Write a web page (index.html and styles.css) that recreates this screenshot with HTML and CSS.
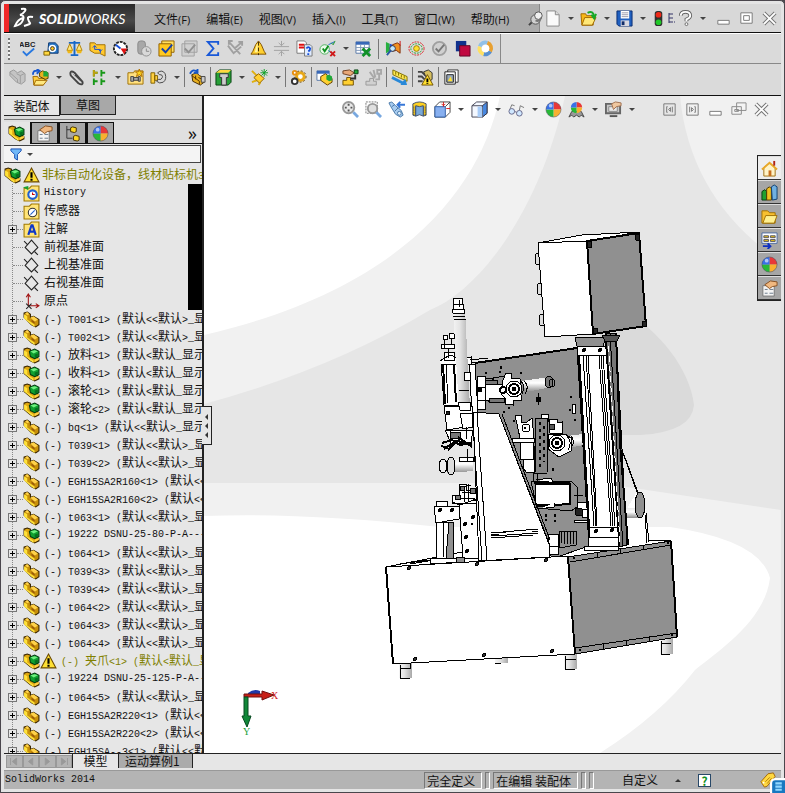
FILE: index.html
```html
<!DOCTYPE html>
<html lang="zh-CN">
<head>
    <meta charset="UTF-8">
    <title>SolidWorks 2014</title>
    <link rel="stylesheet" href="styles.css">
</head>
<body>
    <!-- icon sprite -->
    <svg class="sprite" aria-hidden="true">
        <defs>
            <linearGradient id="metal" x1="0" x2="1" y1="0" y2="0">
                <stop offset="0" stop-color="#f4f4f4"/><stop offset=".4" stop-color="#e4e4e4"/><stop offset="1" stop-color="#a8a8a8"/>
            </linearGradient>
            <linearGradient id="metalV" x1="0" x2="0" y1="0" y2="1">
                <stop offset="0" stop-color="#e8e8e8"/><stop offset=".4" stop-color="#fff"/><stop offset="1" stop-color="#8c8c8c"/>
            </linearGradient>
        </defs>
        <symbol id="part" viewBox="0 0 16 16"><path d="M1 2l3-1 3 2v3l3-1 5 3v5l-3 2-4-2-7-7z" fill="#c8900a" stroke="#3a2600"/><path d="M1 3l3 2v3l7 5v2l-3-2-7-6z" fill="#ffe23a"/><path d="M7 6l3-1 4 3-3 2zM4 1l2 2-2 1-2-2z" fill="#ffd24a"/><path d="M8 8l3 2v2l-3-2z" fill="#9c5c08"/></symbol>
        <symbol id="asm" viewBox="0 0 16 16"><path d="M1 2l3-1 3 1v4l2 1 6 4v2l-4 2-4-2-6-5z" fill="#e0a810" stroke="#3a2600"/><path d="M1 3l3 2v4l6 4v2l-3-2-6-5z" fill="#ffe23a"/><path d="M6 4l5-2 4 2v5l-4 2-4-2z" fill="#10a030" stroke="#043c10"/><path d="M7 4l4-1 3 1-4 2z" fill="#70f080"/><path d="M11 7l3-1v3l-3 1z" fill="#067020"/><path d="M11 12l4-2v2l-4 2z" fill="#ffd24a"/></symbol>
        <symbol id="warn" viewBox="0 0 16 16"><path d="M8 1l7 13H1z" fill="#ffe033" stroke="#6b4a00"/><path d="M7 5h2v5H7zM7 11h2v2H7z"/></symbol>
        <symbol id="history" viewBox="0 0 16 16"><path d="M1 3h5l2-2h7v14H1z" fill="#ffe478" stroke="#a07800"/><circle cx="9" cy="9" r="4" fill="#fff" stroke="#2060d0" stroke-width="2"/><path d="M9 7v2h2" fill="none" stroke="#c00"/><path d="M0 2l5-1v4z" fill="#18a030"/></symbol>
        <symbol id="sensor" viewBox="0 0 16 16"><path d="M1 3h5l2-2h7v14H1z" fill="#ffe478" stroke="#a07800"/><circle cx="9" cy="9" r="4" fill="#fff" stroke="#333"/><path d="M7 11l4-4" stroke="#2060d0"/></symbol>
        <symbol id="note" viewBox="0 0 16 16"><path d="M1 3h5l2-2h7v14H1z" fill="#ffe478" stroke="#a07800"/><path d="M5 13l3-9h1l3 9M6 10h5" fill="none" stroke="#1038c8" stroke-width="2"/></symbol>
        <symbol id="plane" viewBox="0 0 16 16"><path d="M8 1l6 7-6 6-6-6zM1 2l3 3M11 12l3 3" fill="none" stroke="#222"/></symbol>
        <symbol id="origin" viewBox="0 0 16 16"><path d="M5 12V2M3 4l2-3 2 3M5 12h10M12 10l3 2-3 2" fill="none" stroke="#a01010"/><path d="M3 10l5 5M8 10l-5 5" stroke="#222"/></symbol>
        <symbol id="spell" viewBox="0 0 18 18"><text x="-1" y="7" font-family="Liberation Sans" font-size="8" font-weight="bold" fill="#222">ABC</text><path d="M3 12l4 4 8-7" fill="none" stroke="#2878e0" stroke-width="2"/></symbol>
        <symbol id="measure" viewBox="0 0 18 18"><path d="M6 3h7l3 3v8H5z" fill="#2878c8" stroke="#103870"/><circle cx="10" cy="9" r="4" fill="#fff"/><circle cx="10" cy="9" r="2" fill="#ffc820" stroke="#333"/><path d="M1 12h6v4H1z" fill="#ffd840" stroke="#806000"/></symbol>
        <symbol id="mass" viewBox="0 0 18 18"><path d="M9 1v15M3 3h12M5 16h8" stroke="#1868c8" stroke-width="2"/><path d="M4 4l-3 7h6zM14 4l-3 7h6z" fill="#ffe880" stroke="#b08000"/><path d="M1 11h6l-1 3H2zM11 11h6l-1 3h-4z" fill="#f0b818"/></symbol>
        <symbol id="section" viewBox="0 0 18 18"><path d="M1 3h5l2 2h9v12l-6-3H6L1 11z" fill="#ffc830" stroke="#a07000"/><path d="M6 6v4h6v4M4 8l2-2 2 2M10 10l2 2 2-2" fill="none" stroke="#1850d8"/></symbol>
        <symbol id="gauge" viewBox="0 0 18 18"><circle cx="9" cy="9" r="7" fill="#fff" stroke="#222" stroke-width="2" stroke-dasharray="3 1"/><path d="M4 5l5 4" stroke="#1850d8" stroke-width="2"/><path d="M9 9l7 0-3 6z" fill="#e01010"/></symbol>
        <symbol id="lightOff" viewBox="0 0 18 18"><rect x="3" y="1" width="8" height="14" rx="3" fill="#a8a8a8" stroke="#888"/><circle cx="12" cy="12" r="5" fill="#d8d8d8" stroke="#909090"/><path d="M12 9v3h3" fill="none" stroke="#888"/></symbol>
        <symbol id="checkOn" viewBox="0 0 18 18"><path d="M4 1h13v12H4z" fill="#ffe060" stroke="#906000"/><path d="M1 4h13v13H1z" fill="#ffc820" stroke="#906000"/><path d="M4 9l4 4 7-8" fill="none" stroke="#1440b0" stroke-width="2"/></symbol>
        <symbol id="checkOff" viewBox="0 0 18 18"><path d="M4 1h13v12H4zM1 4h13v13H1z" fill="#d0d0d0" stroke="#a0a0a0"/><path d="M4 9l4 4 7-8" fill="none" stroke="#909090" stroke-width="2"/></symbol>
        <symbol id="sigma" viewBox="0 0 18 18"><path d="M15 5V2H4l6 7-6 7h11v-3" fill="none" stroke="#1858d8" stroke-width="2"/></symbol>
        <symbol id="scatter" viewBox="0 0 18 18"><path d="M2 2l12 13M15 3L8 9M1 6l6 8 8-7M12 2h4v4M2 5V1h4" fill="none" stroke="#a0a0a0" stroke-width="2"/></symbol>
        <symbol id="bell" viewBox="0 0 18 18"><path d="M9 1l3 4 3 7 2 3H1l2-3 3-7z" fill="#ffd030" stroke="#805000"/><path d="M9 2v14" stroke="#402800" stroke-dasharray="4 2"/><path d="M5 13l2-8 1-1v9z" fill="#fff4a0"/></symbol>
        <symbol id="spread" viewBox="0 0 18 18"><path d="M1 7h16M1 11h16M9 1v5M9 12v5M6 3l3 3 3-3M6 15l3-3 3 3" fill="none" stroke="#a0a0a0"/></symbol>
        <symbol id="compare" viewBox="0 0 18 18"><path d="M1 1h8l2 2v11H1z" fill="#fff" stroke="#777"/><path d="M3 5h6M3 8h6" stroke="#e01010" stroke-width="2"/><path d="M9 5h6l2 2v10H9z" fill="#e0ecff" stroke="#777"/><path d="M11 9q2-3 4 0 0 2-2 3M13 14v2" fill="none" stroke="#1850d8" stroke-width="2"/></symbol>
        <symbol id="verify" viewBox="0 0 18 18"><circle cx="6" cy="10" r="5" fill="#eafaea" stroke="#50b060"/><path d="M4 9l2 3 4-6" fill="none" stroke="#109020" stroke-width="2"/><path d="M10 5l6-3M10 11l3 3" stroke="#1868d0"/><path d="M12 12l5 5M17 12l-5 5" stroke="#d01818" stroke-width="2"/><path d="M13 3l2 2 2-4" fill="none" stroke="#109020"/></symbol>
        <symbol id="table" viewBox="0 0 18 18"><path d="M1 2h14v12H1z" fill="#fff" stroke="#5878a8"/><path d="M1 2h14v3H1z" fill="#3868b8"/><path d="M1 8h14M1 11h14M6 5v9M10 5v9" stroke="#8098b8"/><path d="M8 9l8 8M16 9l-8 8" stroke="#109028" stroke-width="3"/></symbol>
        <symbol id="curv" viewBox="0 0 18 18"><path d="M1 2l4 2v8l-4 2z" fill="#28b040"/><path d="M5 4l3 1v7l-3 1z" fill="#1850d8"/><path d="M8 5l5-2 3 2v9l-4-3-4 1z" fill="#f09020" stroke="#803010"/><circle cx="8" cy="9" r="3" fill="#c0e8ff" stroke="#334"/><path d="M6 11l-4 5" stroke="#2858a0" stroke-width="2"/><path d="M16 1v5" stroke="#d01010"/></symbol>
        <symbol id="waves" viewBox="0 0 18 18"><ellipse cx="9" cy="9" rx="8" ry="7" fill="none" stroke="#d82020" stroke-dasharray="2 1"/><ellipse cx="9" cy="9" rx="6" ry="5" fill="none" stroke="#20a030" stroke-dasharray="2 1"/><ellipse cx="9" cy="9" rx="3" ry="3" fill="#ffe030" stroke="#a08000"/></symbol>
        <symbol id="okOff" viewBox="0 0 18 18"><circle cx="9" cy="9" r="7" fill="#d0d0d0" stroke="#a0a0a0" stroke-width="2"/><path d="M5 9l3 3 6-7" fill="none" stroke="#777" stroke-width="2"/></symbol>
        <symbol id="squares" viewBox="0 0 18 18"><path d="M2 1h11v11H2z" fill="#10308c"/><path d="M6 6h11v11H6z" fill="#c00840" stroke="#600828"/></symbol>
        <symbol id="ring" viewBox="0 0 18 18"><g fill="none" stroke-width="4"><path d="M3 7a6 6 0 0 1 8-4" stroke="#90c0e8"/><path d="M11 3a6 6 0 0 1 3 9" stroke="#e8a030"/><path d="M14 12a6 6 0 0 1-7 3" stroke="#5890d0"/><path d="M7 15a6 6 0 0 1-4-8" stroke="#ffe060"/></g><circle cx="9" cy="9" r="4" fill="#fff"/></symbol>
        <symbol id="asmOff" viewBox="0 0 18 18"><path d="M1 3l4-2 4 3 4-2 4 3v8l-4 3-5-2-7-7z" fill="#c4c4c4" stroke="#989898"/><path d="M1 4l8 7v3M8 5l4 2 4-2M12 7v8" fill="none" stroke="#9c9c9c"/></symbol>
        <symbol id="insert" viewBox="0 0 18 18"><path d="M1 8h5l1 2h7l-2 7H2z" fill="#ffd040" stroke="#a06800"/><path d="M4 12h12l-4 5H2z" fill="#ffe880" stroke="#a06800"/><path d="M1 6q0-5 5-4M5 0l3 2-3 3" fill="none" stroke="#1858d0" stroke-width="2"/><path d="M8 4l3-2 6 2v6l-3 1-6-3z" fill="#e8b020" stroke="#504000"/><path d="M12 3l3-1 2 2v4h-5z" fill="#20a838"/></symbol>
        <symbol id="clip" viewBox="0 0 18 18"><path d="M15 13L7 4Q4 2 3 3t0 4l8 8q3 2 4 1t0-3L7 6" fill="none" stroke="#444" stroke-width="2"/><path d="M5 5l8 8" stroke="#999"/></symbol>
        <symbol id="pattern" viewBox="0 0 18 18"><path d="M3 1v7M3 4h4M11 1v7M11 4h4M3 10v7M3 13h4M11 10v7M11 13h4" stroke="#189818" stroke-width="2"/><path d="M3 1v7M3 4h4" stroke="#c0a010" stroke-width="2"/></symbol>
        <symbol id="smart" viewBox="0 0 18 18"><path d="M1 4h6l1-2h9v14H1z" fill="#ffe080" stroke="#a07000"/><path d="M4 8h3v5H4zM7 9h5v3H7zM12 8h2v5h-2z" fill="#aaa" stroke="#444"/><path d="M13 0l1 3h3l-2 2 1 3-3-2-3 2 1-3-2-2h3z" fill="#ffd820" stroke="#b07000"/></symbol>
        <symbol id="hook" viewBox="0 0 18 18"><path d="M1 4h4v11H1zM5 7h3v5H5z" fill="#ffd040" stroke="#806000"/><path d="M8 4q5-4 8 1 2 6-2 9-4 2-7-1l2-2q3 1 4-2t-3-3z" fill="#d8d8d8" stroke="#444"/></symbol>
        <symbol id="move" viewBox="0 0 18 18"><path d="M3 6l5-2 3 3 5 2v5l-4 3-8-4z" fill="#e8b020" stroke="#402800"/><path d="M3 7l8 6v3M10 9l6 3M7 7v4" stroke="#503000" fill="none"/><path d="M1 5q3-6 8-2M9 0v4H5" fill="none" stroke="#1858c8" stroke-width="2"/><path d="M13 8h4v6h-4z" fill="#ccc" stroke="#444"/></symbol>
        <symbol id="hidden" viewBox="0 0 18 18"><path d="M1 4l4-3h12v13l-3 3H1z" fill="#28a038" stroke="#064010"/><path d="M1 4l4-3h12l-3 3z" fill="#ffd840"/><path d="M5 5h9v4h-2v8H7V9H5z" fill="#ccc" stroke="#333"/></symbol>
        <symbol id="axis" viewBox="0 0 18 18"><path d="M1 2l6 6M1 14l5-2M8 17l2-3" stroke="#e0b010" stroke-width="2"/><path d="M8 5l6 5-5 5-6-6z" fill="#ffd030" stroke="#906000"/><path d="M14 0v8M10 4h8M11 1l6 6M17 1l-6 6" stroke="#10a028"/></symbol>
        <symbol id="gears" viewBox="0 0 18 18"><circle cx="11" cy="8" r="4" fill="#fff" stroke="#e8a818" stroke-width="3"/><circle cx="11" cy="8" r="6" fill="none" stroke="#704800" stroke-dasharray="2 2"/><circle cx="5" cy="13" r="3" fill="#fff" stroke="#333" stroke-width="2"/><circle cx="5" cy="4" r="2" fill="#fff" stroke="#e89010" stroke-width="2"/></symbol>
        <symbol id="bom" viewBox="0 0 18 18"><path d="M1 2h13v10H1z" fill="#fff" stroke="#5878a8"/><path d="M1 2h13v3H1z" fill="#3868b8"/><path d="M5 8l5-3 7 5v4l-5 3-7-5z" fill="#ffd030" stroke="#604000"/><path d="M11 7l3-1 3 2v4l-3 1-3-2z" fill="#20a838"/></symbol>
        <symbol id="explode" viewBox="0 0 18 18"><path d="M1 12h4V9h4v3h3v5H1z" fill="#ffd030" stroke="#705000"/><path d="M1 2l7-1 5 3-4 3-8-2z" fill="#e8a878" stroke="#704020"/><path d="M13 1h4v4h-4z" fill="#20a838" stroke="#064010"/><path d="M14 6v4H9" fill="none" stroke="#333" stroke-width="2"/></symbol>
        <symbol id="explodeOff" viewBox="0 0 18 18"><path d="M1 13h4v-3h4v3h3v4H1z" fill="#d0d0d0" stroke="#999"/><path d="M13 1h4v4h-4zM15 6v5h-4M5 3l5 7M9 1l2 8" fill="none" stroke="#a8a8a8" stroke-width="2"/></symbol>
        <symbol id="ruler" viewBox="0 0 18 18"><path d="M2 1l15 7v5L2 6z" fill="#ffe850" stroke="#807000"/><path d="M5 3v3M8 4v3M11 6v3M14 7v3" stroke="#807000"/><path d="M1 9l12 6" stroke="#2888d8" stroke-width="3"/><path d="M10 17l7 0-2-7z" fill="#2888d8"/></symbol>
        <symbol id="clash" viewBox="0 0 18 18"><path d="M1 3h4l4 4M1 8h4l3 3M1 13h5" fill="none" stroke="#444" stroke-width="2"/><path d="M7 3l5-2 4 3v7l-4 3z" fill="#d8c060" stroke="#333"/><path d="M11 6l6 11H5z" fill="#ffe030" stroke="#705000"/><path d="M11 10v4M11 15v1" stroke="#000" stroke-width="2"/></symbol>
        <symbol id="snap" viewBox="0 0 18 18"><path d="M5 1h11v13H5z" fill="#fff" stroke="#333"/><path d="M2 3h11v13H2z" fill="#fff" stroke="#222"/><path d="M4 6h7v8H4z" fill="#9ab" stroke="#222"/><path d="M5 13l3-5 2 5z" fill="#ffe030"/></symbol>
        <symbol id="pin" viewBox="0 0 18 18"><path d="M4 13l-3 3" stroke="#444" stroke-width="2"/><circle cx="8" cy="10" r="5" fill="#d0d0d0" stroke="#555"/><circle cx="11" cy="6" r="4" fill="#f0f0f0" stroke="#555"/><path d="M8 11q4 2 6-3" fill="none" stroke="#777" stroke-width="2"/></symbol>
        <symbol id="new" viewBox="0 0 18 18"><path d="M3 1h9l4 4v12H3z" fill="#fafafa" stroke="#888"/><path d="M12 1v4h4" fill="#ddd" stroke="#888"/></symbol>
        <symbol id="open" viewBox="0 0 18 18"><path d="M1 4h5l1 2h7v10H2z" fill="#f8b818" stroke="#a06800"/><path d="M5 8h12l-4 8H2z" fill="#ffe878" stroke="#a06800"/><path d="M8 3q6-3 7 4M12 5l3 4 2-5" fill="none" stroke="#18a828" stroke-width="2"/></symbol>
        <symbol id="save" viewBox="0 0 18 18"><path d="M1 1h16v16H3l-2-2z" fill="#2060c0" stroke="#0a2c70"/><path d="M5 1h9v8H5z" fill="#fff"/><path d="M6 3h7M6 5h7M6 7h7" stroke="#99a"/><path d="M5 11h9v6H5z" fill="#d8d8e0"/><path d="M6 12h3v4H6z" fill="#102c68"/></symbol>
        <symbol id="light" viewBox="0 0 18 18"><rect x="5" y="1" width="8" height="16" rx="3" fill="#303030"/><circle cx="9" cy="5" r="3" fill="#f02818"/><circle cx="9" cy="13" r="3" fill="#20c828"/></symbol>
        <symbol id="list" viewBox="0 0 9 18"><path d="M2 4v10M2 5h4M2 9h4M2 13h4M7 13h1" stroke="#336" fill="none"/></symbol>
        <symbol id="help" viewBox="0 0 18 18"><path d="M4 6q0-4 5-4t5 4q0 2-4 4v2" fill="none" stroke="#666" stroke-width="4"/><path d="M4 6q0-4 5-4t5 4q0 2-4 4v2" fill="none" stroke="#fff" stroke-width="2"/><circle cx="10" cy="15" r="1.5" fill="#fff" stroke="#666"/></symbol>
        <symbol id="min" viewBox="0 0 18 18"><path d="M3 11h12v4H3z" fill="#fff" stroke="#777"/></symbol>
        <symbol id="max" viewBox="0 0 18 18"><path d="M3 3h12v11H3zM6 6h6v5H6z" fill="#fff" stroke="#777"/></symbol>
        <symbol id="restore" viewBox="0 0 18 18"><path d="M7 2h10v8H7zM2 6h10v8H2zM5 9h4v2H5z" fill="#f4f4f4" stroke="#888"/></symbol>
        <symbol id="close" viewBox="0 0 18 18"><path d="M3 3l12 12M15 3L3 15" stroke="#777" stroke-width="4"/><path d="M3 3l12 12M15 3L3 15" stroke="#fff" stroke-width="2"/></symbol>
        <symbol id="dockL" viewBox="0 0 18 18"><path d="M3 3h12v12H3zM7 6h-1v6h1M8 9l2-2v4zM12 6v6" fill="none" stroke="#777"/></symbol>
        <symbol id="dockR" viewBox="0 0 18 18"><path d="M3 3h12v12H3zM11 6h1v6h-1M10 9l-2-2v4zM6 6v6" fill="none" stroke="#777"/></symbol>
        <symbol id="zoomFit" viewBox="0 0 18 18"><circle cx="7" cy="7" r="6" fill="#e8e8e8" stroke="#999" stroke-width="2"/><path d="M7 3v2M7 9v2M3 7h2M9 7h2" stroke="#555" stroke-width="2"/><path d="M12 12l5 5" stroke="#78a8e0" stroke-width="3"/></symbol>
        <symbol id="zoomArea" viewBox="0 0 18 18"><path d="M1 1h12v12H1z" fill="none" stroke="#777" stroke-dasharray="2 1"/><circle cx="8" cy="8" r="5" fill="#e0e0e0" stroke="#999" stroke-width="2"/><path d="M12 12l5 5" stroke="#78a8e0" stroke-width="3"/></symbol>
        <symbol id="prev" viewBox="0 0 18 18"><path d="M1 2l3-1 4 4 6 5 2 5-3 2-5-3-5-8z" fill="#a8ccf0" stroke="#4878a8"/><path d="M4 6l3-2M7 11l4-4" stroke="#4878a8"/><circle cx="12" cy="13" r="2" fill="#e0f0ff" stroke="#4878a8"/><path d="M18 4h-7M13 1l-3 3 3 3" fill="none" stroke="#3878d8" stroke-width="2"/></symbol>
        <symbol id="cut" viewBox="0 0 18 18"><path d="M2 3q7-4 14 0v12l-3 1V6q-4 2-8 0v10l-3-1z" fill="#ffd020" stroke="#405068"/><path d="M5 5q4 2 8 0v11q-4-3-8 0z" fill="#78a8d8" stroke="#405068"/><path d="M3 6v9M15 6v9" stroke="#333" stroke-dasharray="1 1"/></symbol>
        <symbol id="orient" viewBox="0 0 18 18"><path d="M1 6l5-5h11v11l-5 5H1z" fill="#fff" stroke="#444"/><path d="M1 6h11v11H1z" fill="#88b0f0" stroke="#3060a8"/><path d="M12 6l5-5" stroke="#444"/><path d="M10 1v5M17 8h-4M8 3l2 2 2-2" fill="none" stroke="#d01818"/></symbol>
        <symbol id="cube" viewBox="0 0 18 18"><path d="M1 5l5-4h11v12l-5 4H1z" fill="#f4f8ff" stroke="#445"/><path d="M12 5l5-4v12l-5 4z" fill="#4888e0" stroke="#334"/><path d="M1 5h11v12" fill="none" stroke="#445"/><path d="M7 6h5v11H7z" fill="#a8ccf8"/></symbol>
        <symbol id="glasses" viewBox="0 0 18 18"><path d="M2 9L4 4l3 1M12 10l1-5 4 2" fill="none" stroke="#777"/><circle cx="4" cy="11" r="3" fill="#d0e8ff" stroke="#668"/><circle cx="12" cy="13" r="3" fill="#d0e8ff" stroke="#668"/><path d="M7 11l2 1" stroke="#668"/></symbol>
        <symbol id="ball" viewBox="0 0 18 18"><path d="M9 9V1a8 8 0 0 1 8 8z" fill="#e83838"/><path d="M9 9h8a8 8 0 0 1-8 8z" fill="#f8b030"/><path d="M9 9v8a8 8 0 0 1-8-8z" fill="#28b838"/><path d="M9 9H1a8 8 0 0 1 8-8z" fill="#3870e8"/><circle cx="9" cy="9" r="8" fill="none" stroke="#445" stroke-opacity=".5"/><circle cx="6" cy="5" r="2" fill="#fff" fill-opacity=".6"/></symbol>
        <symbol id="scene" viewBox="0 0 18 18"><path d="M1 17l3-6h10l3 6-3-2-2 2-3-2-3 2-2-2z" fill="#999" stroke="#444"/><path d="M9 7V1a6 6 0 0 1 6 6z" fill="#e83838"/><path d="M15 7a6 6 0 0 1-6 6V7z" fill="#f8b030"/><path d="M9 13a6 6 0 0 1-6-6h6z" fill="#28b838"/><path d="M3 7a6 6 0 0 1 6-6v6z" fill="#3870e8"/></symbol>
        <symbol id="screen" viewBox="0 0 18 18"><path d="M1 3h15v10H1z" fill="#c8c8c8" stroke="#666" stroke-width="2"/><path d="M4 6h9v5H4z" fill="#e8e8e8" stroke="#888"/><path d="M7 3l4-2 6 1v3l-5 1-3 3z" fill="#f0c8a0" stroke="#a07050"/><path d="M5 16h8" stroke="#555" stroke-width="2"/></symbol>
        <symbol id="props" viewBox="0 0 18 18"><path d="M2 6h12v11H2z" fill="#f4f4f4" stroke="#777"/><path d="M4 10h3M4 14h3M9 10h4M9 14h4" stroke="#678"/><path d="M4 5l6-4 7 1v4l-5 1-3 2z" fill="#f0b880" stroke="#885020"/></symbol>
        <symbol id="config" viewBox="0 0 18 18"><path d="M3 1v13h6M3 5h4" fill="none" stroke="#333"/><path d="M7 3l2-1 4 1v4l-2 1-4-1zM10 12l2-1 4 1v4l-2 1-4-1z" fill="#ffd820" stroke="#443000"/></symbol>
        <symbol id="home" viewBox="0 0 18 18"><path d="M3 8v9h12V8L9 3z" fill="#fff4c8" stroke="#a07010"/><path d="M1 10l8-7 8 7" fill="none" stroke="#e8a828" stroke-width="2"/><path d="M8 11h3v6H8z" fill="#c87020"/><path d="M13 1h2v5h-2z" fill="#b02010"/></symbol>
        <symbol id="library" viewBox="0 0 18 18"><path d="M1 8l3-2 2 2v9H1z" fill="#20a030" stroke="#063c10"/><path d="M6 5l3-2 2 2v12H6z" fill="#f0c020" stroke="#503800"/><path d="M11 3l3-2 3 2v13l-5 1z" fill="#70b0e0" stroke="#104070"/></symbol>
        <symbol id="folder" viewBox="0 0 18 18"><path d="M1 3h6l2 2h6v11H1z" fill="#f8c030" stroke="#a07000"/><path d="M5 8h12l-3 8H2z" fill="#fff090" stroke="#a07000"/></symbol>
        <symbol id="palette" viewBox="0 0 18 18"><path d="M1 1h16v11H1z" fill="#fff" stroke="#4868a0"/><path d="M3 4h5v2H3zM10 4h5v2h-5zM3 8h5v2H3zM10 8h5v2h-5z" fill="#e8c010" stroke="#556"/><path d="M2 15h7M7 12l3 3-3 3" fill="none" stroke="#1030c0" stroke-width="2"/></symbol>
        <symbol id="funnel" viewBox="0 0 14 14"><path d="M1 1h11v2L8 7v6l-3-2V7L1 3z" fill="#70b8f8" stroke="#1048b0"/></symbol>
        <symbol id="tag" viewBox="0 0 18 18"><path d="M1 11L9 2l6-1 2 4-9 11-3 1z" fill="#ffd840" stroke="#a06000"/><path d="M6 11l5-5M8 13l5-6" stroke="#b07808"/><circle cx="4" cy="12" r="1" fill="#fff"/></symbol>
    </svg>

    <div class="window">
        <header class="titlebar">
            <div class="brand">
                <svg class="ds" viewBox="0 0 22 22" aria-hidden="true"><path d="M8 2q6-1 4 2T7 8q5 0 3 5T2 19q3-7 8-8M20 10q-6-1-5 2t2 4-6 3" fill="none" stroke="#fff" stroke-width="2"/></svg>
                <span class="logo"><b>SOLID</b>WORKS</span>
            </div>
            <nav class="menu">
                <button>文件<small>(F)</small></button>
                <button>编辑<small>(E)</small></button>
                <button>视图<small>(V)</small></button>
                <button>插入<small>(I)</small></button>
                <button>工具<small>(T)</small></button>
                <button>窗口<small>(W)</small></button>
                <button>帮助<small>(H)</small></button>
                <button class="tool pin" aria-label="固定"><svg><use href="#pin"/></svg></button>
            </nav>
            <div class="quick">
                <button class="tool" aria-label="新建"><svg><use href="#new"/></svg></button><button class="drop" aria-label="更多"></button>
                <button class="tool" aria-label="打开"><svg><use href="#open"/></svg></button><button class="drop" aria-label="更多"></button>
                <button class="tool" aria-label="保存"><svg><use href="#save"/></svg></button><button class="drop" aria-label="更多"></button>
                <button class="tool snug" aria-label="重建"><svg><use href="#light"/></svg></button>
                <button class="half" aria-label="选项"><svg><use href="#list"/></svg></button>
                <button class="tool snug" aria-label="帮助"><svg><use href="#help"/></svg></button>
                <button class="drop end" aria-label="更多"></button>
                <button class="tool" aria-label="最小化"><svg><use href="#min"/></svg></button>
                <button class="tool" aria-label="最大化"><svg><use href="#max"/></svg></button>
                <button class="tool" aria-label="关闭"><svg><use href="#close"/></svg></button>
            </div>
        </header>

        <div class="toolbar first">
            <span class="grip"></span>
            <button class="tool" aria-label="拼写检验"><svg><use href="#spell"/></svg></button>
            <button class="tool" aria-label="测量"><svg><use href="#measure"/></svg></button>
            <button class="tool" aria-label="质量属性"><svg><use href="#mass"/></svg></button>
            <button class="tool" aria-label="剖面属性"><svg><use href="#section"/></svg></button>
            <button class="tool" aria-label="性能评估"><svg><use href="#gauge"/></svg></button>
            <button class="tool" aria-label="传感器"><svg><use href="#lightOff"/></svg></button>
            <button class="tool" aria-label="检查"><svg><use href="#checkOn"/></svg></button>
            <button class="tool" aria-label="检查实体"><svg><use href="#checkOff"/></svg></button>
            <button class="tool" aria-label="方程式"><svg><use href="#sigma"/></svg></button>
            <button class="tool" aria-label="输入诊断"><svg><use href="#scatter"/></svg></button>
            <button class="tool" aria-label="误差分析"><svg><use href="#bell"/></svg></button>
            <button class="tool" aria-label="厚度分析"><svg><use href="#spread"/></svg></button>
            <button class="tool" aria-label="比较文件"><svg><use href="#compare"/></svg></button>
            <button class="tool" aria-label="验证"><svg><use href="#verify"/></svg></button><button class="drop" aria-label="更多"></button>
            <button class="tool" aria-label="设计表"><svg><use href="#table"/></svg></button>
            <span class="sep roomy"></span>
            <button class="tool" aria-label="曲率"><svg><use href="#curv"/></svg></button>
            <button class="tool" aria-label="斑马条纹"><svg><use href="#waves"/></svg></button>
            <button class="tool" aria-label="确认"><svg><use href="#okOff"/></svg></button>
            <button class="tool" aria-label="干涉检查"><svg><use href="#squares"/></svg></button>
            <button class="tool" aria-label="可持续性"><svg><use href="#ring"/></svg></button>
            <span class="sep roomy tall"></span>
        </div>
        <div class="toolbar second">
            <button class="tool" aria-label="编辑零部件"><svg><use href="#asmOff"/></svg></button>
            <button class="tool" aria-label="插入零部件"><svg><use href="#insert"/></svg></button><button class="drop" aria-label="更多"></button>
            <button class="tool" aria-label="配合"><svg><use href="#clip"/></svg></button>
            <button class="tool" aria-label="线性阵列"><svg><use href="#pattern"/></svg></button><button class="drop" aria-label="更多"></button>
            <button class="tool" aria-label="智能扣件"><svg><use href="#smart"/></svg></button>
            <button class="tool" aria-label="移动零部件"><svg><use href="#hook"/></svg></button><button class="drop" aria-label="更多"></button>
            <span class="sep"></span>
            <button class="tool" aria-label="显示隐藏"><svg><use href="#move"/></svg></button>
            <span class="sep"></span>
            <button class="tool" aria-label="装配体特征"><svg><use href="#hidden"/></svg></button><button class="drop" aria-label="更多"></button>
            <button class="tool" aria-label="参考几何体"><svg><use href="#axis"/></svg></button><button class="drop" aria-label="更多"></button>
            <span class="sep"></span>
            <button class="tool" aria-label="运动算例"><svg><use href="#gears"/></svg></button>
            <span class="sep"></span>
            <button class="tool" aria-label="材料明细表"><svg><use href="#bom"/></svg></button>
            <span class="sep"></span>
            <button class="tool" aria-label="爆炸视图"><svg><use href="#explode"/></svg></button>
            <button class="tool" aria-label="爆炸直线草图"><svg><use href="#explodeOff"/></svg></button>
            <span class="sep"></span>
            <button class="tool" aria-label="间隙验证"><svg><use href="#ruler"/></svg></button>
            <span class="sep"></span>
            <button class="tool" aria-label="碰撞"><svg><use href="#clash"/></svg></button>
            <span class="sep"></span>
            <button class="tool" aria-label="快照"><svg><use href="#snap"/></svg></button>
        </div>

        <main class="work">
            <aside class="panel">
                <div class="tabs">
                    <button class="tab active">装配体</button>
                    <button class="tab">草图</button>
                </div>
                <div class="managers">
                    <button class="manager active" aria-label="特征树"><svg><use href="#asm"/></svg></button>
                    <button class="manager" aria-label="属性"><svg><use href="#props"/></svg></button>
                    <button class="manager" aria-label="配置"><svg><use href="#config"/></svg></button>
                    <button class="manager" aria-label="外观"><svg><use href="#ball"/></svg></button>
                    <button class="more">»</button>
                </div>
                <div class="filter">
                    <svg><use href="#funnel"/></svg><button class="drop" aria-label="过滤选项"></button>
                    <input type="text" aria-label="过滤">
                </div>
                <div class="tree">
                    <div class="root">
                        <svg><use href="#asm"/></svg><svg><use href="#warn"/></svg>
                        <span class="label warned" id="rootLabel"></span>
                    </div>
                    <ul id="nodes"></ul>
                    <div class="blackout"></div>
                </div>
            </aside>

            <section class="viewport">
                <svg class="canvas" viewBox="204 96 577 657" preserveAspectRatio="xMinYMin slice" role="img" aria-label="装配体模型">
                    <!-- backdrop -->
                    <path d="M204 96h577v657H204z" fill="#fff"/>
                    <path d="M500 96C480 190 400 290 204 335V516Q300 512 440 527H670Q760 540 770 578C765 620 720 650 695 670Q660 715 600 753H781V96z" fill="#f1f1f1"/>
                    <path d="M565 96C540 210 480 290 430 310Q330 370 204 404V483H600L781 510V240Q700 225 690 96z" fill="#e6e6e6"/>
                    <path d="M680 96Q690 200 781 262V96z" fill="#f1f1f1"/>
                    <path d="M600 300L620 308C660 330 690 370 694 405Q692 432 640 435H600z" fill="#dadada"/>

                    <g stroke="#000" stroke-width="1" fill="#fff" shape-rendering="crispEdges">
                        <!-- base feet -->
                        <g fill="url(#metal)" stroke="none">
                            <path d="M399 663h13v15h-13z"/><path d="M564 653h13v16h-13z"/><path d="M660 638h13v16h-13z"/><path d="M495 656h13v7h-13z"/>
                        </g>
                        <path d="M400 665v13h10M400 668h11M410 663v5M565 656v13h10M565 659h11M661 641v13h9M661 643h10M495 663h6" fill="none"/>
                        <!-- base box -->
                        <path d="M386 567l46-9 110-22 129 5-103 17z"/>
                        <path d="M386 567l182-11 7 98-182 10z"/>
                        <path d="M568 557l103-16 6 96-102 17z" fill="#909090"/>
                        <path d="M570 562l101-17M575 648l102-15M597 553v5M620 549v5M643 546v4M603 644v5M626 640v5M649 636v5" fill="none"/>
                        <path d="M568 557l7 97M671 541l6 96" stroke-width="2"/>
                        <path d="M400 564l30-4 28-2M410 564l24-4" fill="none"/>
                        <path d="M386 567l7 97" stroke-width="2"/>
                        <g fill="#333"><circle cx="409" cy="568" r="1.5"/><circle cx="477" cy="564" r="1.5"/><circle cx="546" cy="560" r="1.5"/><circle cx="415" cy="659" r="1.5"/><circle cx="484" cy="655" r="1.5"/><circle cx="552" cy="651" r="1.5"/><circle cx="574" cy="558" r="1"/><circle cx="668" cy="543" r="1"/><circle cx="580" cy="650" r="1"/><circle cx="672" cy="635" r="1"/></g>

                        <!-- cable drum behind the column -->
                        <path d="M637 492q8 5 9 21l3 29h-23V510z" stroke="none"/>
                        <path d="M622 450l15 42M624 455l14 38" fill="none"/>
                        <path d="M646 513l3 29M645 515l2 28" fill="none"/>
                        <path d="M626 508h14v10h-14z" fill="url(#metalV)" stroke="none"/>
                        <ellipse cx="640" cy="505" rx="5" ry="13" fill="#909090"/>

                        <!-- back plate -->
                        <path d="M475 363l102-15 12 198-32 11-12-2-46-140-24 2z" fill="#909090"/>
                        <path d="M475 363l102-15" stroke-width="2"/>
                        <g fill="#000" stroke="none">
                            <path d="M485 372h2v2h-2zM500 366h2v3h-2zM492 378h2v2h-2zM570 396h2v2h-2zM574 419h2v2h-2zM569 409h2v2h-2zM508 407h2v2h-2zM503 411h2v2h-2zM513 420h2v2h-2zM545 514h2v3h-2zM554 514h2v3h-2zM545 519h2v2h-2zM554 520h2v2h-2zM552 468h2v3h-2zM538 393h1v12h-1zM536 397h2v5h-2zM539 397h2v5h-2zM499 371h2v2h-2zM520 372h2v2h-2z"/>
                        </g>
                        <ellipse cx="574" cy="409" rx="2" ry="5"/>

                        <!-- motor -->
                        <path d="M531 481h40l6 6v20l-6 4-34-3z" fill="#909090"/>
                        <path d="M535 484h34v20h-34z"/>
                        <path d="M534 483h36M537 506l33-2M570 483v22" stroke-width="2" fill="none"/>
                        <path d="M536 480l15-2 2 4M539 509l15-2v-4M574 495h9M577 502h12v12h-12z"/>
                        <circle cx="579" cy="512" r="4" fill="#222"/><path d="M582 509h8v8h-8zM574 520h14v2h-14z"/>
                        <!-- cooling fins -->
                        <path d="M548 534h10v20h-10zM548 546h10"/>
                        <path d="M559 531h17v14l-17 3z" fill="#909090"/>
                        <path d="M561 532v11M564 532v12M567 532v12M570 532v12M573 532v12"/>

                        <!-- lower gripper -->
                        <path d="M560 437l23-3v11l-20 4z" fill="url(#metalV)" stroke="none"/>
                        <path d="M515 415h6v7h6l5-4 2 20h-14zM549 419h8v4l5-1v11h-12zM541 414h7v7h-7z"/>
                        <path d="M512 438h22v4h-22zM520 442h13v17h-13zM524 459h10v13h-8l-3-5z"/>
                        <path d="M536 418h12l-1 55h-12z" fill="#858585"/>
                        <path d="M540 422v46M544 426v36" fill="none" stroke-dasharray="3 4" stroke-width="2"/>
                        <path d="M534 446v22M533 473v8h4v-8" fill="none"/>
                        <path d="M548 434h17l6 4v13l-12 6-11-8z"/>
                        <circle cx="557" cy="443" r="8"/><circle cx="557" cy="443" r="5" stroke-width="2"/><circle cx="557" cy="443" r="2" fill="#000"/>
                        <path d="M567 436q6 6 1 14M571 436q5 6 0 12" fill="none"/>
                        <circle cx="526" cy="428" r="4"/><circle cx="552" cy="427" r="3" fill="#555"/><circle cx="525" cy="428" r="1" fill="#000"/>

                        <!-- upper gripper -->
                        <path d="M522 381l27-4 2 10-25 5z" fill="url(#metalV)" stroke="none"/>
                        <path d="M477 376h8v33h-7zM478 387h7M478 400h7M485 384h20v16h-20zM486 379l20-3M488 402l18-1"/>
                        <path d="M485 380h12v4h-12zM489 398h15v4h-15z" fill="#777"/>
                        <path d="M503 380l3-7 6 1-1 4 9 1v10l2 11-9 1v4l-8-1v-6l-4-4z"/>
                        <circle cx="514" cy="389" r="8"/><circle cx="514" cy="389" r="5" stroke-width="2"/><circle cx="514" cy="389" r="2" fill="#000"/>
                        <circle cx="503" cy="390" r="3" stroke-width="2"/><circle cx="480" cy="390" r="2" fill="#000"/>
                        <path d="M524 381q6 5 1 13M521 381q5 5 1 13" fill="none"/>
                        <ellipse cx="549" cy="382" rx="4" ry="6" fill="#777"/><ellipse cx="552" cy="383" rx="3" ry="4" fill="none"/>

                        <!-- left slide -->
                        <path d="M441 361h18l2 44h-17z"/>
                        <path d="M443 363l2 41M454 364l2 38" stroke-width="2"/>
                        <path d="M446 363l2 40"/>
                        <path d="M440 361l10-6 8 3 13-1v7h-30M443 335h4v4h-4zM449 333h5v5h-5zM441 344h13v4h-13zM444 340v8M451 338v6M448 348v10M444 352h10v8h-10z"/>
                        <path d="M470 360l18-2M472 362h14" fill="none"/>
                        <path d="M469 364h6l3 48h-6z"/>
                        <!-- left head block -->
                        <path d="M444 406h28v20l-25 4z"/>
                        <circle cx="448" cy="413" r="2" fill="#222"/><path d="M445 430h28l-2 13h-20zM460 413h12l1 14-10 2zM450 430v8M466 427v12"/>
                        <path d="M450 432h10v6h-10z" fill="#777"/>
                        <path d="M442 443l10-3 8 5 12-2M444 449l12-8 16 3M448 450l12-11M458 437l14 10M441 446l7 2" stroke-width="2" fill="none"/>
                        <!-- rod -->
                        <path d="M453 309h12l5 99h-11z" fill="url(#metal)" stroke="none"/>
                        <path d="M453 298h9l2 11h-10zM459 300v7M453 304h10M452 309h12v4h-11z"/>
                        <path d="M453 316h12M454 319h12M459 390h10M458 402h12v8h-10z"/>
                        <path d="M464 372h6v8h-6z"/>
                        <!-- side roller -->
                        <path d="M447 460l26-2v13l-26 2z" fill="url(#metalV)" stroke="none"/>
                        <path d="M459 457h14v4h-14z"/>
                        <ellipse cx="451" cy="466" rx="4" ry="9" fill="#ddd"/><ellipse cx="443" cy="466" rx="4" ry="7" fill="#eee"/>
                        <path d="M467 449v12"/>

                        <!-- left stand -->
                        <path d="M459 503l18-3 5 58h-19z"/>
                        <path d="M460 484h6v6h10v9l-16 6-8-3v-7h7z"/>
                        <path d="M463 487l8-2M462 492h12M455 498h20M452 503h24M468 484v18M464 490v12"/>
                        <path d="M460 486h4v4h-4zM470 488h5v5h-5zM455 495h5v4h-5z" fill="#777"/>
                        <path d="M436 522h17v36h-17z"/><path d="M449 522h4l1 36h-8z" fill="#909090"/><path d="M444 522l-1 36"/>
                        <path d="M434 506h25v13l-23 4z"/><path d="M436 501h11v5h-11zM436 523l23-4"/>
                        <path d="M430 558h33v4l-33 2z"/><path d="M456 557h8v5h-8z" fill="#909090"/>
                        <g fill="#000" stroke="none"><circle cx="440" cy="510" r="2"/><circle cx="452" cy="510" r="2"/><circle cx="473" cy="517" r="2"/><circle cx="465" cy="524" r="2"/><circle cx="466" cy="537" r="2"/><circle cx="467" cy="551" r="2"/><circle cx="472" cy="524" r="1"/></g>

                        <!-- gusset plate -->
                        <path d="M473 412l26 2 50 129v14l-70 4z"/>
                        <path d="M499 414l50 130M502 414l48 126" fill="none"/>
                        <path d="M472 410l10 151M477 412l10 149" fill="none"/>
                        <path d="M491 533l47-4M491 536l47-3M491 538l42-3M492 532l14 1M491 534h8M532 531h6" fill="none"/>

                        <!-- column -->
                        <path d="M575 337h31l-3 9h-26z" fill="#909090"/>
                        <path d="M577 346h30l14 192-32 2z"/>
                        <path d="M577 355h30M583 355l11 171M588 355l9 171M599 355l12 171M603 355l12 171M586 355l10 171M601 355l12 171" fill="none"/>
                        <path d="M579 355l10 172" fill="none" stroke-width="2"/>
                        <path d="M589 527h30v10h-30zM588 537h30v9h-30z"/>
                        <path d="M584 546h34v4h-34z"/>
                        <g fill="#000" stroke="none"><circle cx="584" cy="350" r="2"/><circle cx="600" cy="350" r="2"/><circle cx="596" cy="531" r="2"/><circle cx="612" cy="530" r="2"/></g>
                        <path d="M605 333h11l11 212-8 2z" fill="#777"/>
                        <path d="M606 334l14 213M610 334l13 213" fill="none"/>
                        <path d="M616 333l4 110 8 102" fill="none" stroke-width="2"/>
                        <path d="M608 336l12 208" stroke="#fff" stroke-dasharray="6 4" fill="none"/>
                        <path d="M602 335h18l-3 6h-12z" fill="#555"/>

                        <!-- control cabinet -->
                        <ellipse cx="538" cy="259" rx="3" ry="6" fill="#ddd"/><ellipse cx="540" cy="289" rx="3" ry="6" fill="#ddd"/><ellipse cx="542" cy="320" rx="3" ry="6" fill="#ddd"/>
                        <path d="M538 243l44-8 57-3-52 9z"/>
                        <path d="M538 243l49-2 6 93-48 3z"/>
                        <path d="M587 241l52-8 7 93-53 8z" fill="#909090" stroke-width="2"/>
                        <path d="M587 241h4v6h-3zM635 234h4v6h-3zM593 328h4v5h-3zM642 321h4v5h-3z" fill="#222"/>
                    </g>

                    <!-- axis triad -->
                    <g class="triad">
                        <path d="M248 693q6-5 12-2v5h-12z" fill="#2038a8"/>
                        <path d="M244 694h18v-3l12 4-12 5v-3h-18z" fill="#c82018" stroke="#701010"/>
                        <path d="M244 697h4v19h3l-4 11-5-11h2z" fill="#108838" stroke="#064820"/>
                        <text x="271" y="699" fill="#d02020">X</text>
                        <text x="243" y="735" fill="#18a038">Y</text>
                    </g>
                </svg>

                <div class="views">
                    <button class="tool" aria-label="整屏显示全图"><svg><use href="#zoomFit"/></svg></button>
                    <button class="tool" aria-label="局部放大"><svg><use href="#zoomArea"/></svg></button>
                    <button class="tool" aria-label="上一视图"><svg><use href="#prev"/></svg></button>
                    <button class="tool" aria-label="剖面视图"><svg><use href="#cut"/></svg></button>
                    <button class="tool" aria-label="视图定向"><svg><use href="#orient"/></svg></button><button class="drop" aria-label="更多"></button>
                    <button class="tool" aria-label="显示样式"><svg><use href="#cube"/></svg></button><button class="drop" aria-label="更多"></button>
                    <button class="tool" aria-label="隐藏项目"><svg><use href="#glasses"/></svg></button><button class="drop" aria-label="更多"></button>
                    <button class="tool" aria-label="编辑外观"><svg><use href="#ball"/></svg></button>
                    <button class="tool" aria-label="应用布景"><svg><use href="#scene"/></svg></button><button class="drop" aria-label="更多"></button>
                    <button class="tool" aria-label="视图设定"><svg><use href="#screen"/></svg></button><button class="drop" aria-label="更多"></button>
                </div>
                <div class="docs">
                    <button class="tool" aria-label="左侧"><svg><use href="#dockL"/></svg></button>
                    <button class="tool" aria-label="右侧"><svg><use href="#dockR"/></svg></button>
                    <button class="tool" aria-label="最小化文档"><svg><use href="#min"/></svg></button>
                    <button class="tool" aria-label="还原文档"><svg><use href="#restore"/></svg></button>
                    <button class="tool" aria-label="关闭文档"><svg><use href="#close"/></svg></button>
                </div>
                <div class="taskpane">
                    <button class="active" aria-label="资源"><svg><use href="#home"/></svg></button>
                    <button aria-label="设计库"><svg><use href="#library"/></svg></button>
                    <button aria-label="文件探索器"><svg><use href="#folder"/></svg></button>
                    <button aria-label="视图调色板"><svg><use href="#palette"/></svg></button>
                    <button aria-label="外观布景"><svg><use href="#ball"/></svg></button>
                    <button aria-label="自定义属性"><svg><use href="#props"/></svg></button>
                </div>
                <button class="splitter" aria-label="折叠面板"><i></i><i></i><i></i></button>
            </section>
        </main>

        <div class="sheets">
            <div class="steps">
                <button aria-label="第一个"><svg viewBox="0 0 16 12"><path d="M4 2v8M11 2v8L6 6z"/></svg></button>
                <button aria-label="上一个"><svg viewBox="0 0 16 12"><path d="M10 2v8L5 6z"/></svg></button>
                <button aria-label="下一个"><svg viewBox="0 0 16 12"><path d="M6 2v8l5-4z"/></svg></button>
                <button aria-label="最后一个"><svg viewBox="0 0 16 12"><path d="M12 2v8M5 2v8l5-4z"/></svg></button>
            </div>
            <button class="sheet active">模型</button>
            <button class="sheet">运动算例1</button>
            <div class="rest"></div>
        </div>

        <footer class="status">
            <span class="product">SolidWorks 2014</span>
            <span class="cell">完全定义</span>
            <span class="cell thin"></span>
            <span class="cell">在编辑 装配体</span>
            <span class="cell thin"></span>
            <span class="cell thin"></span>
            <span class="custom">自定义</span>
            <span class="up"></span>
            <button class="hint">?</button>
            <svg class="tagicon"><use href="#tag"/></svg>
        </footer>
    </div>
    <svg class="badge" viewBox="0 0 14 14" aria-hidden="true"><rect x="1" y="1" width="16" height="16" rx="4" fill="#1878c0" stroke="#fff" stroke-width="2"/><path d="M5 5h6M5 8h6M5 11h6" stroke="#90d8ff" stroke-width="2"/></svg>

    <script src="script.js"></script>
</body>
</html>
```
FILE: styles.css
```css
* {
    box-sizing: border-box;
}

body {
    margin: 0;
    height: 100vh;
    overflow: hidden;
    background: #4a464c;
    font-family: "Liberation Sans", "Noto Sans CJK SC", sans-serif;
    font-size: 12px;
    color: #111;
}

button {
    margin: 0;
    padding: 0;
    border: 0;
    background: none;
    font: inherit;
    color: inherit;
}

.sprite {
    position: absolute;
    width: 0;
    height: 0;
}

.window {
    display: flex;
    flex-direction: column;
    height: 100vh;
    padding: 3px;
    background: #e4e4e4;
    border: 1px solid #4a464c;
    border-radius: 5px 5px 0 0;
}

/* title bar */

.titlebar {
    display: flex;
    flex: none;
    height: 29px;
    background: #d8d8d8;
    border-bottom: 1px solid #111;
}

.brand {
    display: flex;
    flex: none;
    align-items: center;
    gap: 4px;
    width: 131px;
    padding-left: 4px;
    border-left: 5px solid #f02828;
    background: linear-gradient(#2a2a2a, #484848 60%, #2c2c2c);
    color: #fff;
}

.ds {
    width: 22px;
    height: 22px;
}

.logo {
    font-family: Lato, sans-serif;
    font-size: 14px;
    font-style: italic;
}

.logo b {
    font-weight: 900;
}

.menu {
    display: flex;
    flex: none;
    align-items: center;
    gap: 16px;
    width: 405px;
    padding: 0 2px 0 19px;
    background: #ababab;
    border-right: 1px solid #888;
}

.menu button {
    flex: none;
    font-family: "Noto Sans CJK SC", sans-serif;
}

.menu small {
    font-family: "Open Sans", sans-serif;
    font-size: 11px;
}

.menu .pin {
    margin-left: auto;
}

.quick {
    display: flex;
    flex: 1;
    align-items: center;
    justify-content: flex-end;
}

.tool {
    display: flex;
    flex: none;
    align-items: center;
    justify-content: center;
    width: 23px;
    height: 22px;
}

.tool svg {
    flex: none;
    width: 17px;
    height: 17px;
}

.snug {
    width: 18px;
}

.half {
    flex: none;
    width: 9px;
    height: 18px;
}

.half svg {
    display: block;
    width: 9px;
    height: 18px;
}

.drop {
    display: flex;
    flex: none;
    align-items: center;
    justify-content: center;
    width: 13px;
    height: 22px;
}

.drop::before {
    content: "";
    border: 3px solid transparent;
    border-top-color: #444;
    border-bottom: 0;
}

.drop.end {
    width: 18px;
}

/* toolbars */

.toolbar {
    display: flex;
    flex: none;
    align-items: center;
    height: 31px;
    background: #dadada;
}

.first {
    border-bottom: 1px solid #888;
    border-top: 1px solid #fff;
}

.second {
    height: 32px;
    padding: 0 0 5px 2px;
    border-bottom: 1px solid #111;
}

.grip {
    width: 2px;
    height: 22px;
    margin: 0 7px 0 4px;
    background: repeating-linear-gradient(#777 0 2px, #f4f4f4 2px 4px);
}

.sep {
    flex: none;
    width: 1px;
    height: 20px;
    margin: 0 1px;
    background: #777;
}

.roomy {
    margin: 0 3px;
}

.tall {
    height: 29px;
    background: #888;
}

/* work area */

.work {
    display: flex;
    flex: 1;
    min-height: 0;
}

.panel {
    display: flex;
    flex-direction: column;
    flex: none;
    width: 200px;
    background: #e6e6e6;
    border-right: 2px solid #222;
}

.tabs {
    display: flex;
    flex: none;
    height: 24px;
    padding-bottom: 3px;
    border-bottom: 1px solid #777;
    background: #dadada;
}

.tab {
    width: 56px;
    margin-bottom: 1px;
    background: #a8a8a8;
    border: 1px solid #222;
    border-top: 0;
    font-family: "Noto Sans CJK SC", sans-serif;
    line-height: 16px;
}

.tab.active {
    margin-bottom: 0;
    background: #e6e6e6;
    border-left: 0;
}

.managers {
    display: flex;
    flex: none;
    height: 24px;
    padding-top: 2px;
    background: #e0e0e0;
}

.manager {
    width: 28px;
    background: #a8a8a8;
    border: 1px solid #111;
    border-left-width: 2px;
}

.manager.active {
    width: 26px;
    background: #e6e6e6;
    border-color: transparent;
    border-left: 0;
}

.manager svg {
    display: block;
    width: 17px;
    height: 17px;
    margin: 0 auto;
}

.more {
    flex: 1;
    padding-right: 5px;
    border-bottom: 1px solid #111;
    font-family: "Open Sans", sans-serif;
    font-size: 18px;
    line-height: 18px;
    text-align: right;
}

.filter {
    display: flex;
    flex: none;
    align-items: center;
    height: 18px;
    margin: 1px 1px 3px 0;
    padding-left: 6px;
    background: #f4f4f4;
    border: 1px solid #444;
    border-left: 0;
}

.filter svg {
    width: 13px;
    height: 13px;
}

.filter input {
    flex: 1;
    min-width: 0;
    height: 14px;
    border: 0;
    background: transparent;
}

/* feature tree */

.tree {
    position: relative;
    flex: 1;
    min-height: 0;
    overflow: hidden;
}

.root,
.tree li {
    display: flex;
    align-items: center;
    height: 18px;
    white-space: nowrap;
}

.root svg,
.tree li svg {
    flex: none;
    width: 17px;
    height: 17px;
}

.root svg {
    margin-right: 2px;
}

.tree ul {
    margin: 0;
    padding: 0 0 0 4px;
    list-style: none;
    background: repeating-linear-gradient(#888 0 1px, transparent 1px 2px) 8px 0 / 1px 100% no-repeat;
}

.plus {
    flex: none;
    width: 9px;
    height: 9px;
    background: linear-gradient(#000, #000) center / 5px 1px no-repeat, linear-gradient(#000, #000) center / 1px 5px no-repeat, #e6e6e6;
    border: 1px solid #777;
}

.twig {
    flex: none;
    width: 6px;
    border-top: 1px dotted #888;
}

.leaf {
    width: 10px;
    margin-left: 5px;
}

.label {
    margin-left: 4px;
    font-family: "Liberation Mono", monospace;
    font-size: 10px;
    line-height: 18px;
}

.root .label {
    margin-left: 0;
}

.label span {
    font-family: "Noto Sans CJK SC", sans-serif;
    font-size: 12px;
}

.label.warned {
    color: #808000;
}

.blackout {
    position: absolute;
    top: 18px;
    right: 0;
    width: 14px;
    height: 126px;
    background: #000;
}

/* graphics area */

.viewport {
    position: relative;
    flex: 1;
    min-width: 0;
    background: #fff;
}

.canvas {
    display: block;
    width: 100%;
    height: 100%;
}

.triad text {
    font-family: "Liberation Serif", serif;
    font-size: 10px;
}

.views,
.docs {
    position: absolute;
    top: 2px;
    left: 135px;
    display: flex;
}

.views .drop {
    width: 14px;
}

.docs {
    left: auto;
    right: 8px;
}

.taskpane {
    position: absolute;
    top: 59px;
    right: 0;
    width: 24px;
    border: 1px solid #222;
    border-width: 1px 0 1px 1px;
}

.taskpane button {
    display: flex;
    align-items: center;
    justify-content: center;
    width: 100%;
    height: 24px;
    background: #a6a6a6;
    border-bottom: 1px solid #333;
    border-top: 1px solid #ddd;
}

.taskpane .active {
    background: #eee;
}

.taskpane svg {
    width: 17px;
    height: 17px;
}

.splitter {
    position: absolute;
    top: 310px;
    left: -2px;
    display: flex;
    flex-direction: column;
    align-items: center;
    justify-content: center;
    gap: 3px;
    width: 10px;
    height: 39px;
    background: #e6e6e6;
    border: 1px solid #222;
    border-left: 0;
}

.splitter i {
    border: 3px solid transparent;
    border-right-color: #333;
    border-left: 0;
}

/* sheet tabs and status */

.sheets {
    display: flex;
    flex: none;
    height: 18px;
    padding: 0 0 2px 2px;
    background: #e6e6e6;
    border-top: 1px solid #222;
    border-bottom: 1px solid #999;
}

.steps {
    display: flex;
    width: 67px;
    padding-top: 1px;
    border-right: 1px solid #222;
}

.steps button {
    flex: 1;
    background: #b4b4b4;
    border: 1px solid #999;
}

.steps svg {
    display: block;
    width: 14px;
    height: 11px;
    fill: #999;
    stroke: #999;
}

.sheet {
    padding: 0 12px 0 6px;
    background: #ababab;
    border: 1px solid #222;
    border-width: 0 1px;
    font-family: "Noto Sans CJK SC", sans-serif;
    line-height: 14px;
}

.sheet.active {
    width: 45px;
    padding: 0;
    background: #e6e6e6;
    border: 0;
}

.rest {
    flex: 1;
}

.status {
    display: flex;
    flex: none;
    align-items: center;
    gap: 3px;
    height: 18px;
    background: #b4b4b4;
    font-family: "Noto Sans CJK SC", sans-serif;
    line-height: 16px;
    white-space: nowrap;
}

.product {
    flex: 1;
    padding-left: 1px;
    font-family: "Liberation Mono", monospace;
    font-size: 10px;
}

.cell {
    height: 17px;
    padding: 0 6px 0 2px;
    border: 1px solid #777;
    border-right-color: #fff;
    border-bottom-color: #fff;
}

.thin {
    width: 5px;
    padding: 0;
}

.custom {
    margin-left: 25px;
}

.up {
    margin: 0 14px;
    border: 3px solid transparent;
    border-bottom-color: #333;
    border-top: 0;
}

.hint {
    width: 13px;
    height: 13px;
    background: #fff;
    border: 1px solid #284868;
    color: #109020;
    font-weight: bold;
    line-height: 11px;
}

.tagicon {
    width: 16px;
    height: 16px;
    margin: 0 5px 0 46px;
}

.badge {
    position: absolute;
    right: 0;
    bottom: 0;
    width: 15px;
    height: 15px;
}
```
FILE: script.js
```js
// [icon, label, expandable, warning]
const nodes = [
    ['history', 'History', false],
    ['sensor', '传感器', false],
    ['note', '注解', true],
    ['plane', '前视基准面', false],
    ['plane', '上视基准面', false],
    ['plane', '右视基准面', false],
    ['origin', '原点', false],
    ['part', '(-) T001<1> (默认<<默认>_显示', true],
    ['part', '(-) T002<1> (默认<<默认>_显示', true],
    ['asm', '(-) 放料<1> (默认<默认_显示', true],
    ['asm', '(-) 收料<1> (默认<默认_显示', true],
    ['asm', '(-) 滚轮<1> (默认<默认_显示', true],
    ['asm', '(-) 滚轮<2> (默认<默认_显示', true],
    ['part', '(-) bq<1> (默认<<默认>_显示', true],
    ['part', '(-) T039<1> (默认<<默认>_显示', true],
    ['part', '(-) T039<2> (默认<<默认>_显示', true],
    ['part', '(-) EGH15SA2R160<1> (默认<<', true],
    ['part', '(-) EGH15SA2R160<2> (默认<<', true],
    ['part', '(-) t063<1> (默认<<默认>_显示', true],
    ['asm', '(-) 19222 DSNU-25-80-P-A---', true],
    ['part', '(-) t064<1> (默认<<默认>_显示', true],
    ['part', '(-) T039<3> (默认<<默认>_显示', true],
    ['part', '(-) T039<4> (默认<<默认>_显示', true],
    ['part', '(-) t064<2> (默认<<默认>_显示', true],
    ['part', '(-) t064<3> (默认<<默认>_显示', true],
    ['part', '(-) t064<4> (默认<<默认>_显示', true],
    ['asm', '(-) 夹爪<1> (默认<默认_显示', true, true],
    ['asm', '(-) 19224 DSNU-25-125-P-A--', true],
    ['part', '(-) t064<5> (默认<<默认>_显示', true],
    ['part', '(-) EGH15SA2R220<1> (默认<<', true],
    ['part', '(-) EGH15SA2R220<2> (默认<<', true],
    ['part', '(-) EGH15SA--3<1> (默认<<默认', true]
];

function labelHtml(text) {
    return text
        .replace(/</g, '&lt;')
        .replace(/[\u4e00-\u9fff\uff0c]+/g, '<span>$&</span>');
}

function icon(name) {
    return '<svg><use href="#' + name + '"/></svg>';
}

document.getElementById('rootLabel').innerHTML = labelHtml('非标自动化设备，线材贴标机3');

document.getElementById('nodes').innerHTML = nodes.map(([type, text, expandable, warning]) => {
    const twig = expandable
        ? '<button class="plus" aria-label="展开"></button><span class="twig"></span>'
        : '<span class="twig leaf"></span>';
    return '<li>' + twig + icon(type) + (warning ? icon('warn') : '') +
        '<span class="label' + (warning ? ' warned' : '') + '">' + labelHtml(text) + '</span></li>';
}).join('');
```
